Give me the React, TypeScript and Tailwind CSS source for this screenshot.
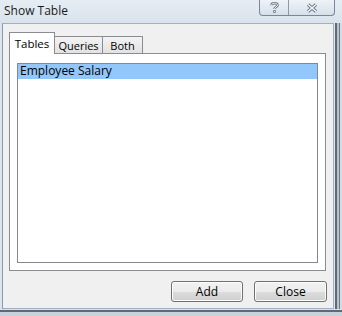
import type { ReactNode } from "react";

const tabs = [
  { label: "Tables", width: "w-[46px]" },
  { label: "Queries", width: "w-[48px]" },
  { label: "Both", width: "w-[40px]" },
];
const tables = ["Employee Salary"];

function CaptionButtons() {
  return (
    <div className="mr-[7px] flex h-[16px] w-[76px] overflow-hidden rounded-b-[4px] border border-t-0 border-[#7b8796] bg-[linear-gradient(to_bottom,#eef3f8,#d7e0ea)]">
      <div className="flex w-[29px] items-center justify-center border-r border-[#8d99a7]">
        <svg width="9" height="11" viewBox="0 0 9 11" aria-hidden>
          <path d="M1.5 3.2 C1.5 0.6 7.5 0.6 7.5 3.2 C7.5 5 4.5 5 4.5 7" fill="none" stroke="#6b7684" strokeWidth="2.6" />
          <path d="M1.5 3.2 C1.5 0.6 7.5 0.6 7.5 3.2 C7.5 5 4.5 5 4.5 7" fill="none" stroke="#f7f9fb" strokeWidth="1" />
          <rect x="3.2" y="8.2" width="2.6" height="2.6" fill="#6b7684" />
          <rect x="4" y="9" width="1" height="1" fill="#f7f9fb" />
        </svg>
      </div>
      <div className="flex flex-1 items-center justify-center">
        <svg width="12" height="10" viewBox="0 0 12 10" aria-hidden>
          <path d="M2 1.5 L10 8.5 M10 1.5 L2 8.5" fill="none" stroke="#6b7684" strokeWidth="3.2" />
          <path d="M2 1.5 L10 8.5 M10 1.5 L2 8.5" fill="none" stroke="#f7f9fb" strokeWidth="1.4" />
        </svg>
      </div>
    </div>
  );
}

function TitleBar() {
  return (
    <div className="flex h-[23px] items-start justify-between bg-[linear-gradient(to_bottom,#e6edf4,#d9e3ed)]">
      <span className="pl-[4px] pt-[3px] text-[12px] leading-[16px] text-[#1b1b1b]">Show Table</span>
      <CaptionButtons />
    </div>
  );
}

function TabStrip({ active }: { active: string }) {
  return (
    <div className="relative z-10 flex h-[21px] items-end">
      {tabs.map((tab) =>
        tab.label === active ? (
          <div
            key={tab.label}
            className={`${tab.width} -mb-px h-[22px] border border-b-0 border-[#898c95] bg-white pt-[3px] text-center text-[11.5px] leading-[15px] text-black`}
          >
            {tab.label}
          </div>
        ) : (
          <div
            key={tab.label}
            className={`${tab.width} h-[17px] border border-b-0 border-l-0 border-[#898c95] bg-[linear-gradient(to_bottom,#f3f3f3,#e2e2e2)] pt-px text-center text-[11px] leading-[15px] text-black`}
          >
            {tab.label}
          </div>
        ),
      )}
    </div>
  );
}

function TableList({ selected }: { selected: string }) {
  return (
    <div className="h-[200px] w-[301px] border border-[#828790] bg-white">
      {tables.map((name) => (
        <div
          key={name}
          className={
            name === selected
              ? "h-[15px] bg-[#92c7fb] pl-[2px] text-[12px] leading-[14px] text-black"
              : "h-[15px] pl-[2px] text-[12px] leading-[14px] text-black"
          }
        >
          {name}
        </div>
      ))}
    </div>
  );
}

function DialogButton({ children, width }: { children: ReactNode; width: string }) {
  return (
    <button
      className={`${width} h-[21px] rounded-[3px] border border-[#707070] bg-[linear-gradient(to_bottom,#f2f2f2_0%,#ebebeb_50%,#dddddd_51%,#cfcfcf_100%)] text-[12px] leading-[17px] text-black shadow-[inset_0_0_0_1px_#fcfcfc]`}
    >
      {children}
    </button>
  );
}

export default function App() {
  return (
    <div className="flex h-[316px] w-[342px] flex-col overflow-hidden bg-[#d9e2ec] font-['Segoe_UI','Open_Sans',sans-serif]">
      <TitleBar />
      <div className="flex h-[286px]">
        <div className="w-[3px] border-r border-[#8e9baa] bg-[#dce5ee]" />
        <div className="flex w-[331px] flex-col border-t border-r border-b border-[#a3afbd] bg-[#f0f0f0] pl-[6px] pt-[8px]">
          <TabStrip active="Tables" />
          <div className="flex h-[218px] w-[317px] border border-[#898c95] bg-white pl-[7px] pt-[9px]">
            <TableList selected="Employee Salary" />
          </div>
          <div className="mt-[10px] flex gap-[11px] pl-[162px]">
            <DialogButton width="w-[72px]">Add</DialogButton>
            <DialogButton width="w-[73px]">Close</DialogButton>
          </div>
        </div>
        <div className="flex flex-1">
          <div className="w-px bg-[#dfe7ef]" />
          <div className="w-[2px] bg-[#5e6977]" />
          <div className="w-[2px] bg-[#b9c3ce]" />
          <div className="w-px bg-[#6f7a87]" />
          <div className="flex-1 bg-[#d3dbe4]" />
        </div>
      </div>
      <div className="flex flex-1 flex-col">
        <div className="h-px bg-[#d8e1ea]" />
        <div className="h-[2px] bg-[#5e6977]" />
        <div className="flex-1 bg-[#c9d1da]" />
      </div>
    </div>
  );
}
